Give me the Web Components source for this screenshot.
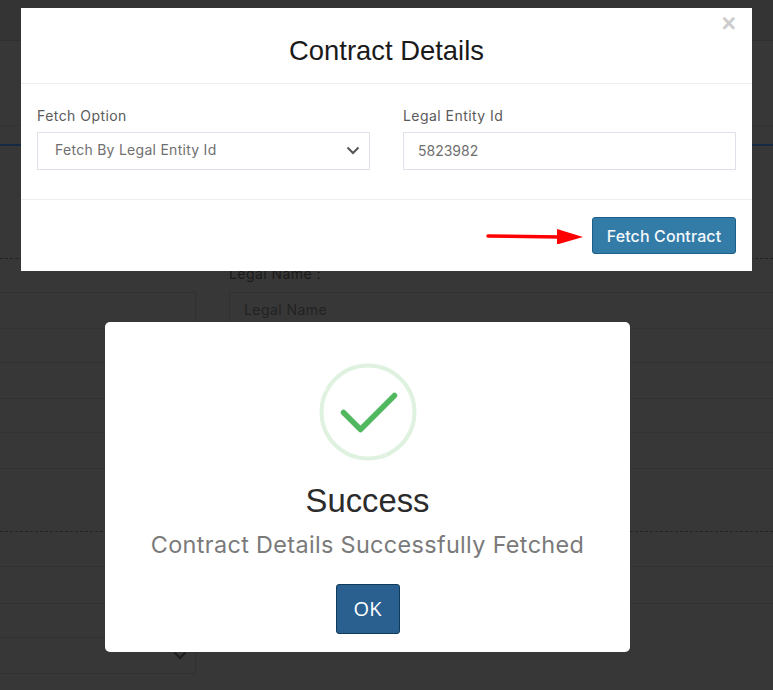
<!DOCTYPE html>
<html lang="en">
<head>
<meta charset="utf-8">
<title>Contract Details</title>
<style>
html,body{margin:0;padding:0;height:100%;overflow:hidden;background:#373737}
body{position:relative;font-family:Inter,"Liberation Sans",sans-serif}
</style>
</head>
<body>
<page-backdrop></page-backdrop>
<contract-modal></contract-modal>
<success-modal></success-modal>
<script>
/* ============ dimmed page behind the dialogs ============ */
var BACK_STYLE = `:host{display:block;width:773px;height:690px;overflow:hidden;background:#373737}
.top{height:40px;background:#343434;border-bottom:1px solid #303030}
.sub{height:84px;border-bottom:1px solid #333}
.navy{margin-top:18px;height:2px;background:#142a40}
.dash{margin-top:112px;border-top:1px dashed #222}
.lbl{height:33px;padding-left:229px;box-sizing:border-box;font:400 14px/30px Inter,sans-serif;letter-spacing:.45px;color:#1a1a1a}
.row{display:grid;grid-template-columns:196px 1fr;column-gap:33px;height:36px}
.row>i{display:block;box-sizing:border-box;border-top:1px solid #313131;border-right:1px solid #313131}
.row>b{display:block;border-top:1px solid #313131;border-left:1px solid #313131;padding-left:14px;font:400 14px/34px Inter,sans-serif;letter-spacing:.45px;color:#222}
.plain{height:35px;box-sizing:border-box;border-top:1px solid #313131}
.dash2{border-top:1px dashed #222}
.chev{display:block;margin-left:173px;margin-top:13px}`;
var BACK_HTML = `<div class="top"></div><div class="sub"></div><div class="navy"></div><div class="dash"></div>
<div class="lbl">Legal Name :</div>
<div class="row"><i></i><b>Legal Name</b></div>
<div class="plain" style="height:34px"></div><div class="plain" style="height:36px"></div><div class="plain" style="height:34px"></div><div class="plain" style="height:36px"></div>
<div class="plain" style="height:63px"></div>
<div class="dash2"></div>
<div class="plain" style="height:34px;border-top:0"></div>
<div class="plain" style="height:37px"></div><div class="plain" style="height:34px"></div>
<div class="row" style="height:37px"><i style="border-bottom:1px solid #313131"><svg class="chev" width="14" height="9" viewBox="0 0 14 9"><path d="M1.500 1.500L7 7L12.500 1.500" fill="none" stroke="#1d1d1d" stroke-width="2"/></svg></i></div>`;
class PageBackdrop extends HTMLElement {
  connectedCallback() {
    if (this._built) return; this._built = true;
    const root = this.attachShadow({ mode: 'open' });
    root.innerHTML = '<style>' + BACK_STYLE + '</style>' + BACK_HTML;
  }
}
customElements.define('page-backdrop', PageBackdrop);

/* ============ one labelled control; a select draws its chevron ============ */
var FIELD_STYLE = `:host{display:block;flex:1 1 0;min-width:0}
label{display:block;font:400 14px/18px Inter,sans-serif;letter-spacing:.45px;color:#5a5a5a;margin-bottom:7px}
.box{display:flex;align-items:center;justify-content:space-between;height:38px;box-sizing:border-box;border:1.5px solid #dfe2ea;font:400 14px/18px Inter,sans-serif;color:#6f6f6f}
svg{display:block}`;
class FormField extends HTMLElement {
  connectedCallback() {
    if (this._built) return; this._built = true;
    const root = this.attachShadow({ mode: 'open' });
    const isSelect = this.hasAttribute('select');
    const chev = isSelect ? '<svg width="14" height="9" viewBox="0 0 14 9"><path d="M1.500 1.500L7 7L12.500 1.500" fill="none" stroke="#555" stroke-width="2"/></svg>' : '';
    root.innerHTML = '<style>' + FIELD_STYLE + '</style><label>' + this.getAttribute('label') + '</label>' +
      '<div class="box" style="' + (isSelect ? 'padding:0 9px 2px 17px;letter-spacing:.27px' : 'padding:0 14px') + '"><span><slot></slot></span>' + chev + '</div>';
  }
}
customElements.define('form-field', FormField);

/* ============ Contract Details dialog ============ */
var CONTRACT_STYLE = `:host{position:absolute;left:21px;top:8px;width:731px;height:263px;display:flex;flex-direction:column;background:#fff;color:#111}
header{position:relative;height:76px;box-sizing:border-box;border-bottom:1px solid #eee;display:flex;align-items:center;justify-content:center;padding-top:10px}
h1{margin:0;font:400 27.4px/32px "Liberation Sans",Arial,sans-serif;color:#1a1a1a}
.x{position:absolute;right:16px;top:5px;font:700 25px/20px "Liberation Sans",Arial,sans-serif;color:#cdcdcd}
.body{height:116px;box-sizing:border-box;padding:23px 16px 0;display:flex;gap:33px;border-bottom:1px solid #eee}
footer{flex:1;display:flex;align-items:flex-start;justify-content:flex-end;gap:8px;padding:17px 16px 0}
.arrow{display:block;margin-top:9px}
button{width:144px;height:37px;box-sizing:border-box;background:#337ca8;border:1px solid #1d5f88;border-radius:3px;color:#f4f8fb;font:500 16px/20px Inter,sans-serif;letter-spacing:.1px;padding:0}`;
var CONTRACT_HTML = `<header><h1>Contract Details</h1><span class="x">&times;</span></header>
<div class="body">
  <form-field label="Fetch Option" select>Fetch By Legal Entity Id</form-field>
  <form-field label="Legal Entity Id">5823982</form-field>
</div>
<footer>
  <svg class="arrow" width="98" height="18" viewBox="0 0 98 18"><path d="M2 10L74 11" stroke="#f00" stroke-width="3.500" stroke-linecap="round" fill="none"/><path d="M71 3L97 11L71 18.500Z" fill="#f00"/></svg>
  <button>Fetch Contract</button>
</footer>`;
class ContractModal extends HTMLElement {
  connectedCallback() {
    if (this._built) return; this._built = true;
    const root = this.attachShadow({ mode: 'open' });
    root.innerHTML = '<style>' + CONTRACT_STYLE + '</style>' + CONTRACT_HTML;
  }
}
customElements.define('contract-modal', ContractModal);

/* ============ Success alert ============ */
var SUCCESS_STYLE = `:host{position:absolute;left:105px;top:322px;width:525px;height:330px;box-sizing:border-box;padding-top:41px;display:flex;flex-direction:column;align-items:center;background:#fff;border-radius:5px}
svg{display:block}
h2{margin:15px 0 0;font:400 32.8px/50px "Liberation Sans",Arial,sans-serif;color:#2b2b2b}
p{margin:3px 0 0;font:400 23.4px/32px Inter,sans-serif;letter-spacing:.35px;color:#7a7a7a}
button{margin-top:23px;width:64px;height:50px;box-sizing:border-box;background:#2a6090;border:1px solid #123a5c;border-radius:3px;color:#fff;font:400 20px/24px "Open Sans",sans-serif;padding:0}`;
var SUCCESS_HTML = `<svg width="98" height="98" viewBox="0 0 98 98">
  <circle cx="49" cy="49" r="46.500" fill="none" stroke="#dff1df" stroke-width="4"/>
  <path d="M6 29L8 25M9 30L11 26M63 94L61 90M67 93L65 89" stroke="#f4faf4" stroke-width="1" fill="none"/>
  <path d="M24.500 49.500L41.500 66.500L75.500 32.500" fill="none" stroke="#52b85f" stroke-width="5.500" stroke-linecap="round" stroke-linejoin="round"/>
</svg>
<h2>Success</h2>
<p>Contract Details Successfully Fetched</p>
<button>OK</button>`;
class SuccessModal extends HTMLElement {
  connectedCallback() {
    if (this._built) return; this._built = true;
    const root = this.attachShadow({ mode: 'open' });
    root.innerHTML = '<style>' + SUCCESS_STYLE + '</style>' + SUCCESS_HTML;
  }
}
customElements.define('success-modal', SuccessModal);
</script>
</body>
</html>
